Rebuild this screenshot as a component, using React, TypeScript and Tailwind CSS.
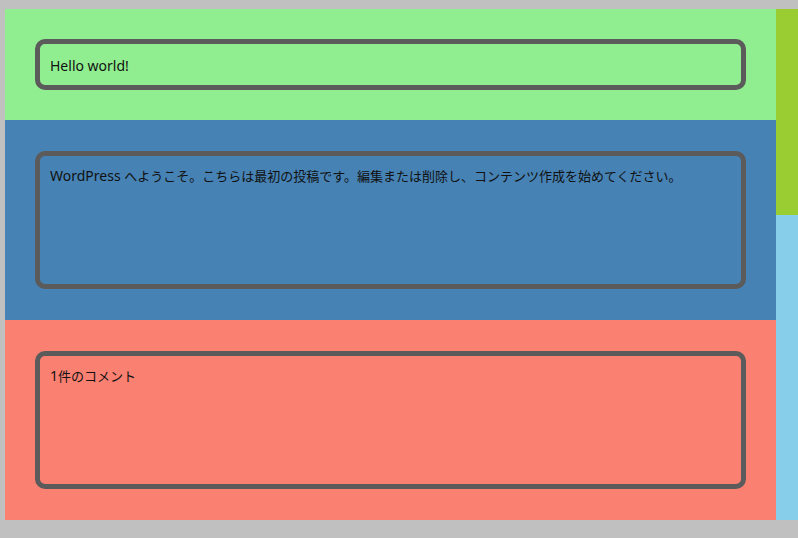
export default function App() {
  const font = { fontFamily: '"Noto Sans", "Noto Sans CJK JP", sans-serif' };
  return (
    <div className="w-[798px] h-[538px] bg-[#c0c0c0] pt-[9px] pl-[5px] pb-[18px] flex text-[14px] text-[#111]" style={font}>
      <div className="flex-1 flex flex-col">
        <section className="h-[111px] bg-[#90ee90] px-[30px] pt-[30px]">
          <div className="h-[51px] border-[5px] border-[#5b5b5b] rounded-[10px] px-[10px] flex items-center leading-[21px]">
            <span className="pt-[1px]">Hello world!</span>
          </div>
        </section>
        <section className="h-[200px] bg-[#4682b4] px-[30px] pt-[31px]">
          <div className="h-[138px] border-[5px] border-[#5b5b5b] rounded-[10px] px-[10px] py-[9px] leading-[21px]">
            WordPress <span className="text-[13px]">へようこそ。こちらは最初の投稿です。編集または削除し、コンテンツ作成を始めてください。</span>
          </div>
        </section>
        <section className="h-[200px] bg-[#fa8072] px-[30px] pt-[31px]">
          <div className="h-[138px] border-[5px] border-[#5b5b5b] rounded-[10px] px-[10px] py-[9px] leading-[21px]">
            1<span className="text-[13px]">件のコメント</span>
          </div>
        </section>
      </div>
      <div className="w-[22px] flex flex-col">
        <div className="h-[206px] bg-[#9acd32]" />
        <div className="flex-1 bg-[#87ceeb]" />
      </div>
    </div>
  );
}
